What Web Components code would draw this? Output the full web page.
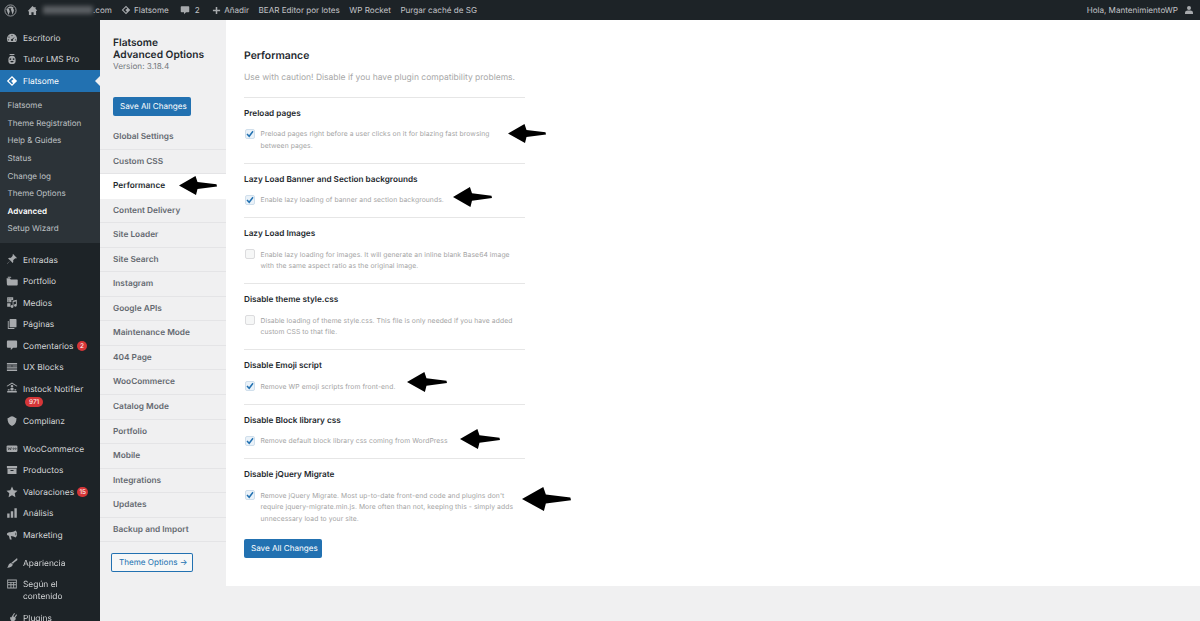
<!DOCTYPE html>
<html lang="es">
<head>
<meta charset="utf-8">
<title>Flatsome Advanced Options</title>
<style>
  html, body { margin: 0; height: 621px; overflow: hidden; background: #f0f0f1; }
  body { font-family: Inter, "Open Sans", sans-serif; text-rendering: geometricPrecision; }
  #page { position: relative; height: 621px; overflow: hidden; filter: blur(.4px); }
  #columns { display: flex; height: 601px; }
</style>
</head>
<body>
<div id="page">
  <admin-bar></admin-bar>
  <div id="columns">
    <side-menu></side-menu>
    <options-page>
      <option-row title="Preload pages" checked>Preload pages right before a user clicks on it for blazing fast browsing between pages.</option-row>
      <option-row title="Lazy Load Banner and Section backgrounds" checked>Enable lazy loading of banner and section backgrounds.</option-row>
      <option-row title="Lazy Load Images">Enable lazy loading for images. It will generate an inline blank Base64 image with the same aspect ratio as the original image.</option-row>
      <option-row title="Disable theme style.css">Disable loading of theme style.css. This file is only needed if you have added custom CSS to that file.</option-row>
      <option-row title="Disable Emoji script" checked>Remove WP emoji scripts from front-end.</option-row>
      <option-row title="Disable Block library css" checked>Remove default block library css coming from WordPress</option-row>
      <option-row title="Disable jQuery Migrate" checked>Remove jQuery Migrate. Most up-to-date front-end code and plugins don't require jquery-migrate.min.js. More often than not, keeping this - simply adds unnecessary load to your site.</option-row>
    </options-page>
  </div>
  <hand-arrow x="179" y="176" w="38" h="19"></hand-arrow>
  <hand-arrow x="508" y="124" w="38" h="19"></hand-arrow>
  <hand-arrow x="453" y="187" w="39" h="20"></hand-arrow>
  <hand-arrow x="407" y="372" w="40" h="20"></hand-arrow>
  <hand-arrow x="460" y="429" w="40" h="20"></hand-arrow>
  <hand-arrow x="522" y="487" w="49" h="24"></hand-arrow>
</div>

<script>
// iconos en una caja de 20x20, parecidos a los dashicons
const ICONS = {
  wp: '<circle cx="10" cy="10" r="8.6" fill="none" stroke="currentColor" stroke-width="1.3"/><path d="M3.4 7.4l3.6 9.6 1.9-5.6-1.4-4h-1V6.5h5v.9h-1.2l3 9 1.8-5.6c.5-1.6-.2-2.6-.9-3.6-.3-.6.1-1.4.9-1.4C12.500 3.500 8 2.800 4.800 6.500h2.700" fill="currentColor"/>',
  home: '<path d="M10 2l3.500 3V3.500h2V7l3 2.800-1 1-1-.8V18h-4.500v-5h-4v5H3.500v-7l-1 .8-1-1z" fill="currentColor"/>',
  diamond: '<path d="M10 1.500L18.500 10 10 18.500 1.500 10zM10 4.500L4.500 10l5.500 5.500 1.800-1.800L8.600 10 12.500 7z" fill="currentColor" fill-rule="evenodd"/>',
  comment: '<path d="M3 2.500h14a1.500 1.500 0 0 1 1.500 1.500v9a1.500 1.500 0 0 1-1.500 1.500h-5l-4 4v-4H3A1.500 1.500 0 0 1 1.500 13V4A1.500 1.500 0 0 1 3 2.500z" fill="currentColor"/>',
  plus: '<path d="M8.300 2h3.400v6.300H18v3.400h-6.300V18H8.300v-6.300H2V8.300h6.300z" fill="currentColor"/>',
  user: '<circle cx="10" cy="6" r="4" fill="currentColor"/><path d="M2 18v-3c0-2.500 3-4 5-4h6c2 0 5 1.500 5 4v3z" fill="currentColor"/>',
  gauge: '<path d="M10 3a8.500 8.500 0 0 0-8.500 8.500c0 2 .7 3.700 1.800 5.100h13.400a8.500 8.500 0 0 0 1.800-5.100A8.500 8.500 0 0 0 10 3zm0 2a1 1 0 1 1 0 2 1 1 0 0 1 0-2zM5 7.500a1 1 0 1 1 0 2 1 1 0 0 1 0-2zm9.800.3l-3.200 4.600a1.800 1.800 0 1 1-1.400-.9zM3.800 12a1 1 0 1 1 0 2 1 1 0 0 1 0-2zm12.400 0a1 1 0 1 1 0 2 1 1 0 0 1 0-2z" fill="currentColor" fill-rule="evenodd"/>',
  tutor: '<path d="M6 1.500h8v2H6zM10 4.500c3.600 0 6 2.500 6 6v3.500c0 2.400-2.600 4.500-6 4.500s-6-2.100-6-4.500v-3.500c0-3.500 2.400-6 6-6zm-2.700 4.200a1.500 1.500 0 1 0 0 3 1.500 1.500 0 0 0 0-3zm5.400 0a1.500 1.500 0 1 0 0 3 1.500 1.500 0 0 0 0-3zM7 13.500c.7 1.500 1.800 2.200 3 2.200s2.300-.7 3-2.200z" fill="currentColor" fill-rule="evenodd"/>',
  pin: '<path d="M11.800 1.800l6.400 6.400-1.400 1-1.400-.6-3.500 3.400c.6 1.800.2 3.300-.8 4.500L7.200 12.600 2.500 18l-.6-.5 5.300-4.800L3.400 9c1.200-1 2.700-1.400 4.500-.8l3.400-3.500-.5-1.500z" fill="currentColor"/>',
  folder: '<path d="M1 5.500h5.500l1.500 2h10.500a1 1 0 0 1 1 1v7.500a1.500 1.500 0 0 1-1.500 1.500H3.500A2 2 0 0 1 1.500 15.500zM3 3h5l1 1.500H3z" fill="currentColor"/>',
  media: '<path d="M2 2h10v4.500H9v4H2zM4 4v1.500h1.500V4zm3.500 0v1.500H9V4zM4 7.500V9h1.500V7.500zM11 8l7-1.800v9.300a2.300 2.300 0 1 1-1.500-2.100V9l-4 1v7.500a2.300 2.300 0 1 1-1.500-2.100zM2 12h5.500v6H2z" fill="currentColor"/>',
  pages: '<path d="M7 1.500h9.500a1 1 0 0 1 1 1v12a1 1 0 0 1-1 1H7a1 1 0 0 1-1-1v-12a1 1 0 0 1 1-1zM3 5h1.500v11.500H14V18.500H4a1 1 0 0 1-1-1z" fill="currentColor"/>',
  blocks: '<path d="M1.500 3.500h17v2.500h-17zM1.500 7.300h8v2h-8zM10.500 7.300h8v2h-8zM1.500 10.600h17v2h-17zM1.500 14h17v2.500h-17z" fill="currentColor"/>',
  instock: '<path d="M10 1l9 5.500-1 1.200L10 3 2 7.700 1 6.500zM10 4.800a2.200 2.200 0 1 1 0 4.400 2.200 2.200 0 0 1 0-4.400zM7.500 10h5v4h-5zM3 12h3v2H3zM14 12h3v2h-3zM2 15h16v2.500H2z" fill="currentColor"/>',
  complianz: '<path d="M2.500 5.500c2 0 3-2.500 7.500-3.500 4.500 1 5.500 3.500 7.500 3.500 0 6-2 10.500-7.500 13-5.500-2.500-7.500-7-7.500-13z" fill="currentColor"/>',
  woo: '<rect x="1" y="4" width="18" height="11" rx="2" fill="currentColor"/><path d="M3.500 7l1 4.500L6.500 8l1.200 3.500L9 7M11.500 9.500a1.100 1.100 0 1 0 2.200 0 1.100 1.100 0 0 0-2.200 0zM15 9.500a1.100 1.100 0 1 0 2.200 0 1.100 1.100 0 0 0-2.200 0z" fill="none" stroke="#1d2327" stroke-width=".9"/>',
  products: '<path d="M1.500 3.500h17V7h-17zM2.500 8h15v8.500h-15zM7.500 10v1.500h5V10z" fill="currentColor" fill-rule="evenodd"/>',
  star: '<path d="M10 1l2.800 6 6.400.8-4.700 4.400 1.200 6.500L10 15.500l-5.700 3.200 1.200-6.500L.8 7.800l6.400-.8z" fill="currentColor"/>',
  chart: '<path d="M2 11h4v7H2zM8 7h4v11H8zM14 2h4v16h-4z" fill="currentColor"/>',
  marketing: '<path d="M16 2.500c1.500 1.300 2.500 3.600 2.500 6s-1 4.500-2.500 5.800c-2-1.600-4.800-2.700-8-2.800l1.500 6H6.500L4.800 11.300C3 11 1.500 10 1.500 8.400 1.500 6 4.500 5.300 7 5.300c3.500 0 6.500-1.200 9-2.800zm.2 3.500a6 6 0 0 0 0 5 3.500 3.500 0 0 0 0-5z" fill="currentColor" fill-rule="evenodd"/>',
  brush: '<path d="M18.500 1.500l.5 3.500-6.500 5-.7 1.800-2.800-2.600 1.700-.9zM8.500 9.800l2.800 2.800c-.3 3.200-3.500 5.300-9.800 5.400 1.800-1.500 2-3 2.800-4.800.6-1.700 2.200-3 4.200-3.400z" fill="currentColor"/>',
  layout: '<path d="M2 2.500h16v15H2zM3.500 4v2.500h13V4zm0 4v2.500h4V8zm5.500 0v2.500h3V8zm4.500 0v2.500h3V8zM3.500 12v4h4v-4zm5.500 0v4h3v-4zm4.500 0v4h3v-4z" fill="currentColor" fill-rule="evenodd"/>',
  plugin: '<path d="M13.500 1.500l1.500 1-3 4.500 2 1.300 3-4.500 1.500 1-3.300 5 1.300 1c-.5 2.500-2.500 4.500-5.500 4.500l-2.500 3.200H2v-1h5l1.800-3c-1.800-1.500-2.500-3.800-1.500-6l1.400.8z" fill="currentColor"/>'
};

function iconSvg(name, size) {
  return `<svg width="${size}" height="${size}" viewBox="0 0 20 20" aria-hidden="true">${ICONS[name]}</svg>`;
}

// barra superior
class AdminBar extends HTMLElement {
  constructor() {
    super();
    this.attachShadow({ mode: "open" });
    this.shadowRoot.innerHTML = `
    <style>
      :host {
        display: flex;
        align-items: center;
        height: 20px;
        background: #1d2327;
        color: #c3c4c7;
        font-size: 8.100px;
        white-space: nowrap;
      }
      .item { display: flex; align-items: center; }
      svg { display: block; color: #a7aaad; flex: none; }
      .domain { width: 50px; height: 8px; background: #5b5f63; filter: blur(2px); margin: 0 0 0 5px; }
      .spacer { flex: 1; }
    </style>
    <span class="item" style="margin-left:4px">${iconSvg("wp", 13)}</span>
    <span class="item" style="margin-left:10px">${iconSvg("home", 11)}<span class="domain"></span>.com</span>
    <span class="item" style="margin-left:9px">${iconSvg("diamond", 10)}<span style="margin-left:3px">Flatsome</span></span>
    <span class="item" style="margin-left:11px">${iconSvg("comment", 10)}<span style="margin-left:5px">2</span></span>
    <span class="item" style="margin-left:12px">${iconSvg("plus", 9)}<span style="margin-left:3.500px">Añadir</span></span>
    <span class="item" style="margin-left:9.500px">BEAR Editor por lotes</span>
    <span class="item" style="margin-left:9.500px">WP Rocket</span>
    <span class="item" style="margin-left:9.500px">Purgar caché de SG</span>
    <span class="spacer"></span>
    <span class="item">Hola, MantenimientoWP<span style="margin:0 6px 0 6px">${iconSvg("user", 10)}</span></span>
    `;
  }
}
customElements.define("admin-bar", AdminBar);

// una entrada del menú lateral
class MenuItem extends HTMLElement {
  constructor() {
    super();
    this.attachShadow({ mode: "open" });
    const badge = this.getAttribute("badge");
    const under = this.hasAttribute("badge-below");
    const badgeHtml = badge ? `<span class="badge">${badge}</span>` : "";
    this.shadowRoot.innerHTML = `
    <style>
      :host {
        display: flex;
        align-items: flex-start;
        min-height: 21.5px;
        color: #d5d7d9;
        font-size: 8.400px;
        line-height: 12px;
        box-sizing: border-box;
        padding: 4.700px 0 4.700px 5.500px;
        position: relative;
      }
      :host([current]) { background: #2271b1; color: #fff; }
      :host([current])::after {
        content: "";
        position: absolute;
        right: 0;
        top: 6px;
        border: 5px solid transparent;
        border-right-color: #f0f0f1;
        border-left-width: 0;
      }
      svg { display: block; color: #a7aaad; flex: none; }
      :host([current]) svg { color: #fff; }
      .label { margin: 1.200px 0 -1.200px 5.500px; width: 72px; }
      .badge {
        display: inline-block;
        background: #d63638;
        color: #fff;
        border-radius: 6px;
        font-size: 6.500px;
        line-height: 10px;
        height: 10px;
        min-width: 10px;
        padding: 0 2px;
        box-sizing: border-box;
        text-align: center;
        vertical-align: 1px;
        margin-left: 1px;
      }
      .below { display: block; height: 10px; margin: 1px 0 0 1px; }
      .below .badge { padding: 0 4px; vertical-align: top; }
    </style>
    ${iconSvg(this.getAttribute("icon"), 12)}
    <span class="label"><slot></slot>${under ? `<span class="below">${badgeHtml}</span>` : (badge ? " " + badgeHtml : "")}</span>
    `;
  }
}
customElements.define("menu-item", MenuItem);

class SideMenu extends HTMLElement {
  constructor() {
    super();
    this.attachShadow({ mode: "open" });
    const sub = ["Flatsome", "Theme Registration", "Help & Guides", "Status", "Change log", "Theme Options", "Advanced", "Setup Wizard"];
    this.shadowRoot.innerHTML = `
    <style>
      :host {
        display: block;
        flex: none;
        width: 100px;
        height: 601px;
        overflow: hidden;
        background: #1d2327;
        padding-top: 7px;
        box-sizing: border-box;
      }
      .sub {
        background: #2c3338;
        padding: 5.800px 0 4.700px;
        margin-bottom: 6px;
      }
      .sub div {
        height: 17.6px;
        line-height: 17.6px;
        padding-left: 7.500px;
        font-size: 8.050px;
        color: #bfc2c5;
      }
      .sub div.on { color: #fff; font-weight: 600; }
      .gap { height: 6.500px; }
    </style>
    <menu-item icon="gauge">Escritorio</menu-item>
    <menu-item icon="tutor">Tutor LMS Pro</menu-item>
    <menu-item icon="diamond" current>Flatsome</menu-item>
    <div class="sub">${sub.map(s => `<div class="${s === "Advanced" ? "on" : ""}">${s.replace("&", "&amp;")}</div>`).join("")}</div>
    <menu-item icon="pin">Entradas</menu-item>
    <menu-item icon="folder">Portfolio</menu-item>
    <menu-item icon="media">Medios</menu-item>
    <menu-item icon="pages">Páginas</menu-item>
    <menu-item icon="comment" badge="2">Comentarios</menu-item>
    <menu-item icon="blocks">UX Blocks</menu-item>
    <menu-item icon="instock" badge="971" badge-below>Instock Notifier</menu-item>
    <menu-item icon="complianz">Complianz</menu-item>
    <div class="gap"></div>
    <menu-item icon="woo">WooCommerce</menu-item>
    <menu-item icon="products">Productos</menu-item>
    <menu-item icon="star" badge="15">Valoraciones</menu-item>
    <menu-item icon="chart">Análisis</menu-item>
    <menu-item icon="marketing">Marketing</menu-item>
    <div class="gap"></div>
    <menu-item icon="brush">Apariencia</menu-item>
    <menu-item icon="layout">Según el contenido</menu-item>
    <menu-item icon="plugin">Plugins</menu-item>
    `;
  }
}
customElements.define("side-menu", SideMenu);

class BlueButton extends HTMLElement {
  constructor() {
    super();
    this.attachShadow({ mode: "open" });
    this.shadowRoot.innerHTML = `
    <style>
      :host {
        display: block;
        width: 64px;
        text-align: center;
        height: 19px;
        line-height: 19px;
        padding: 0 7px;
        background: #2271b1;
        color: #fff;
        border-radius: 2px;
        font-size: 8.100px;
        white-space: nowrap;
      }
      :host([outline]) {
        width: 66px;
        background: #f6f7f7;
        color: #2271b1;
        box-shadow: inset 0 0 0 1px #2271b1;
        padding: 0 8px;
      }
    </style>
    <slot></slot>
    `;
  }
}
customElements.define("blue-button", BlueButton);

// columna gris con las pestañas
class OptionsNav extends HTMLElement {
  constructor() {
    super();
    this.attachShadow({ mode: "open" });
    const tabs = ["Global Settings", "Custom CSS", "Performance", "Content Delivery", "Site Loader", "Site Search", "Instagram", "Google APIs", "Maintenance Mode", "404 Page", "WooCommerce", "Catalog Mode", "Portfolio", "Mobile", "Integrations", "Updates", "Backup and Import"];
    this.shadowRoot.innerHTML = `
    <style>
      :host {
        display: block;
        flex: none;
        width: 126px;
        background: #f0f0f1;
      }
      .head { padding: 18px 13px 0; height: 60px; box-sizing: border-box; }
      h1 { margin: 0; font-size: 10.200px; line-height: 11.500px; font-weight: 600; color: #23282d; }
      .version { font-size: 8.200px; line-height: 11px; color: #72777c; }
      .save { padding-left: 13px; height: 45px; box-sizing: border-box; padding-top: 17px; }
      .tabs { display: flex; flex-direction: column; }
      .tab {
        height: 24.550px;
        line-height: 25.500px;
        padding-left: 13px;
        box-sizing: border-box;
        border-bottom: 1px solid #e4e4e6;
        font-size: 8.300px;
        font-weight: 600;
        color: #646970;
      }
      .tab.on { background: #fff; color: #23282d; border-bottom-color: #fff; }
      .theme { padding: 11px 0 0 11px; }
    </style>
    <div class="head"><h1>Flatsome<br>Advanced Options</h1><div class="version">Version: 3.18.4</div></div>
    <div class="save"><blue-button>Save All Changes</blue-button></div>
    <div class="tabs">${tabs.map(t => `<div class="tab${t === "Performance" ? " on" : ""}">${t}</div>`).join("")}</div>
    <div class="theme"><blue-button outline>Theme Options →</blue-button></div>
    `;
  }
}
customElements.define("options-nav", OptionsNav);

class OptionRow extends HTMLElement {
  constructor() {
    super();
    this.attachShadow({ mode: "open" });
    const on = this.hasAttribute("checked");
    this.shadowRoot.innerHTML = `
    <style>
      :host {
        display: block;
        border-top: 1px solid #e6e6e6;
        padding: 10px 0 11.500px;
      }
      h3 { margin: 0 0 9.500px; font-size: 8.200px; line-height: 11px; font-weight: 600; color: #23282d; }
      .line { display: flex; align-items: flex-start; }
      .box {
        flex: none;
        box-sizing: border-box;
        width: 10px;
        height: 10px;
        margin: .5px 5.500px 0 1px;
        border: 1px solid #dcdcde;
        border-radius: 2px;
        background: #f6f7f7;
      }
      .box.on { background: #eaf2f9; border-color: #d0dfec; }
      .box svg { display: block; margin: -1px; }
      .text { width: 256px; font-size: 6.760px; line-height: 11.500px; color: #a3a3a3; letter-spacing: .08px; }
    </style>
    <h3>${this.getAttribute("title")}</h3>
    <div class="line">
      <span class="box${on ? " on" : ""}">${on ? '<svg width="10" height="10" viewBox="0 0 10 10"><path d="M2 5l2.200 2.300L8 2.300" fill="none" stroke="#2271b1" stroke-width="1.500"/></svg>' : ""}</span>
      <span class="text"><slot></slot></span>
    </div>
    `;
  }
}
customElements.define("option-row", OptionRow);

class OptionsPage extends HTMLElement {
  constructor() {
    super();
    this.attachShadow({ mode: "open" });
    this.shadowRoot.innerHTML = `
    <style>
      :host {
        display: flex;
        flex: 1;
        height: 566px;
        background: #fff;
      }
      main { width: 281px; margin-left: 18px; }
      h2 { margin: 28.500px 0 0; font-size: 10.400px; line-height: 14px; font-weight: 600; color: #23282d; }
      .intro { margin: 9px 0 0; font-size: 8.500px; line-height: 12px; color: #a8a8a8; padding-bottom: 13px; }
      .foot { padding-top: 3.500px; }
    </style>
    <options-nav></options-nav>
    <main>
      <h2>Performance</h2>
      <p class="intro">Use with caution! Disable if you have plugin compatibility problems.</p>
      <slot></slot>
      <div class="foot"><blue-button>Save All Changes</blue-button></div>
    </main>
    `;
  }
}
customElements.define("options-page", OptionsPage);

// flechas negras dibujadas encima de la captura
class HandArrow extends HTMLElement {
  constructor() {
    super();
    this.attachShadow({ mode: "open" });
    const a = n => this.getAttribute(n);
    this.shadowRoot.innerHTML = `
    <style>
      :host { position: absolute; left: ${a("x")}px; top: ${a("y")}px; display: block; }
      svg { display: block; }
    </style>
    <svg width="${a("w")}" height="${a("h")}" viewBox="0 0 38 19" preserveAspectRatio="none"><path d="M0 9.500L16.500 0 18.500 6 37.500 8.300 38 10.500 18.500 13 17 19z" fill="#000"/></svg>
    `;
  }
}
customElements.define("hand-arrow", HandArrow);
</script>
</body>
</html>
